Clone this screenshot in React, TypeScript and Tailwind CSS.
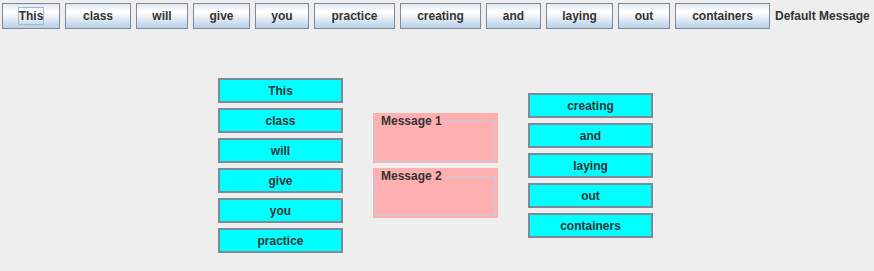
import React from 'react';

const font = { fontFamily: '"Liberation Sans", Arial, sans-serif' };

const topButtons: { label: string; w: string }[] = [
  { label: 'This', w: 'w-[58px]' },
  { label: 'class', w: 'w-[66px]' },
  { label: 'will', w: 'w-[52px]' },
  { label: 'give', w: 'w-[57px]' },
  { label: 'you', w: 'w-[54px]' },
  { label: 'practice', w: 'w-[81px]' },
  { label: 'creating', w: 'w-[81px]' },
  { label: 'and', w: 'w-[55px]' },
  { label: 'laying', w: 'w-[67px]' },
  { label: 'out', w: 'w-[52px]' },
  { label: 'containers', w: 'w-[95px]' },
];

const leftWords = ['This', 'class', 'will', 'give', 'you', 'practice'];
const rightWords = ['creating', 'and', 'laying', 'out', 'containers'];

const OceanButton = ({ label, w, focused }: { label: string; w: string; focused?: boolean }) => (
  <button
    className={`${w} h-[26px] shrink-0 flex items-center justify-center border border-[#7a8a99] bg-[linear-gradient(to_bottom,#dde8f3_0%,#ffffff_30%,#ffffff_35%,#b8cfe5_100%)] text-[12px] font-bold text-[#333333]`}
  >
    <span className={focused ? 'border border-[#a3b8cc] leading-[16px]' : 'leading-[16px]'}>{label}</span>
  </button>
);

const CyanButton = ({ label }: { label: string }) => (
  <button className="w-[125px] h-[25px] flex items-center justify-center bg-[#00ffff] border-2 border-[#7f8a99] text-[12px] font-bold text-[#333333]">
    {label}
  </button>
);

const MessagePanel = ({ title }: { title: string }) => (
  <div className="w-[125px] h-[50px] bg-[#ffafaf] pt-[1px] px-[2px] pb-[2px] flex">
    <fieldset className="flex-1 border border-[#b8cfe5] min-w-0">
      <legend className="ml-[3px] px-[2px] text-[12px] leading-[15px] font-bold text-[#333333]">{title}</legend>
    </fieldset>
  </div>
);

export default function App() {
  return (
    <div className="w-[874px] h-[271px] bg-[#eeeeee] overflow-hidden" style={font}>
      <div className="flex items-start gap-[5px] pl-[2px] pt-[3px] h-[35px]">
        {topButtons.map((b, i) => (
          <OceanButton key={b.label} label={b.label} w={b.w} focused={i === 0} />
        ))}
        <span className="h-[26px] flex items-center text-[12px] font-bold text-[#333333] whitespace-nowrap">Default Message</span>
      </div>

      <div className="flex items-center gap-[30px] pl-[218px] mt-[43px] h-[175px]">
        <div className="flex flex-col gap-[5px]">
          {leftWords.map((w) => (
            <CyanButton key={w} label={w} />
          ))}
        </div>
        <div className="flex flex-col gap-[5px]">
          <MessagePanel title="Message 1" />
          <MessagePanel title="Message 2" />
        </div>
        <div className="flex flex-col gap-[5px]">
          {rightWords.map((w) => (
            <CyanButton key={w} label={w} />
          ))}
        </div>
      </div>
    </div>
  );
}
